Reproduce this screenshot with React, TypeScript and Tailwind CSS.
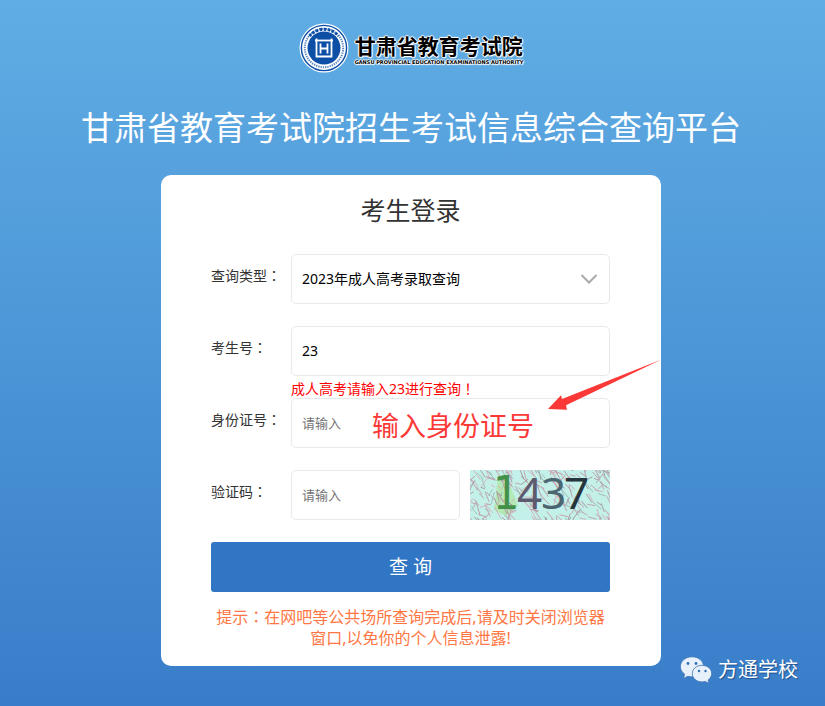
import { useState } from 'react';
import type { FormEvent } from 'react';

// small deterministic generator, keeps the captcha noise stable between renders
const createRandom = (seed: number) => () => {
  seed = (seed * 16807) % 2147483647;
  return seed / 2147483647;
};

const random = createRandom(1437);
const noiseColors = ['#c79aa8', '#b993a3', '#d6a9b8', '#9fb5b4', '#a58f9c'];
const noise = Array.from({ length: 270 }, () => {
  const x = random() * 150 - 8;
  const y = random() * 58 - 8;
  const back = random() > 0.8;
  const dx = (back ? -1 : 1) * (2 + random() * 7);
  const dy = 1 + random() * 12;
  return { x, y, dx, dy, color: noiseColors[Math.floor(random() * noiseColors.length)] };
});

const Seal = () => (
  <svg className="h-[50px] w-[50px] shrink-0" viewBox="0 0 50 50" aria-hidden="true">
    <circle cx="25" cy="25" r="24.5" fill="#ffffff" />
    <circle cx="25" cy="25" r="22.6" fill="none" stroke="#0d4ea6" strokeWidth="1.4" />
    <circle cx="25" cy="25" r="19.2" fill="none" stroke="#5c86c2" strokeWidth="2" strokeDasharray="1.3 1" />
    <path d="M10.500 13A19 19 0 0 1 39.500 13" fill="none" stroke="#0d4ea6" strokeWidth="3" strokeDasharray="2.600 1.400" />
    <circle cx="25" cy="25" r="16.5" fill="#0d4ea6" />
    <g fill="none" stroke="#ffffff" strokeWidth="1.8">
      <path d="M17.500 15.500V33.500H32.500V15.500" />
      <path d="M16 17.500H34" />
      <path d="M21.500 20.500V30.500M28.500 20.500V30.500M21.500 25.500H28.500" />
    </g>
  </svg>
);

const Logo = () => (
  <div className="flex items-center justify-center gap-[6px]">
    <Seal />
    <div className="pt-1 text-left whitespace-nowrap text-black [text-shadow:1px_0_1px_#fff,-1px_0_1px_#fff,0_1px_1px_#fff,0_-1px_1px_#fff,1px_1px_1px_#fff]">
      <p className="text-[21px] leading-6 font-bold">甘肃省教育考试院</p>
      <p className="font-['DejaVu_Sans'] text-[5px] leading-[8px] font-bold">
        GANSU PROVINCIAL EDUCATION EXAMINATIONS AUTHORITY
      </p>
    </div>
  </div>
);

const Captcha = () => (
  <svg className="h-[50px] w-[140px] shrink-0 overflow-visible" viewBox="0 0 140 50" role="img" aria-label="验证码">
    <clipPath id="captcha-area">
      <rect width="140" height="50" />
    </clipPath>
    <g clipPath="url(#captcha-area)">
      <rect width="140" height="50" fill="#c3f0e8" />
      <path d="M28 6L36 4L48 36L36 46L24 40Z" fill="#b4e8b4" />
      {noise.map((line, index) => (
        <path
          key={index}
          d={`M${line.x} ${line.y}l${line.dx} ${line.dy}`}
          stroke={line.color}
          strokeWidth="1"
          strokeOpacity="0.85"
          fill="none"
        />
      ))}
    </g>
    <text x="23" y="39" fontFamily="'DejaVu Sans Condensed', 'DejaVu Sans', sans-serif" fontSize="46" fill="#43904a">
      1
    </text>
    <g fontFamily="'Noto Sans', sans-serif" fontSize="44">
      <text x="47" y="39" fill="#5b5a6e">4</text>
      <text x="71" y="39" fill="#4a6670">3</text>
      <text x="94" y="39" fill="#25353b">7</text>
    </g>
  </svg>
);

const Arrow = () => (
  <svg className="pointer-events-none absolute -top-[39px] left-[337px] h-[51px] w-[114px]" viewBox="0 0 114 51" aria-hidden="true">
    <path d="M0 50L13 36.3L14 40L113.5 0.5L18 46.3L19 50.8Z" fill="#fb3a38" />
  </svg>
);

const WechatIcon = () => (
  <svg className="h-7 w-8" viewBox="0 0 32 28" aria-hidden="true">
    <g fill="#e8f0fb" stroke="#3972b3" strokeWidth="0.8">
      <path d="M12 .8C5.400.8.4 5.100.4 10.700c0 3.100 1.700 5.800 4.300 7.500L3.400 22.500l4.500-2.200c1.300.4 2.700.5 4.100.5 6.600 0 11.600-4.500 11.600-10.100S18.600.8 12 .8Z" />
      <path d="M22 9.300c-5.500 0-9.700 3.700-9.700 8.300s4.200 8.300 9.700 8.300c1.200 0 2.300-.2 3.300-.5l3.700 2.200-.9-3.600c2.200-1.500 3.600-3.800 3.600-6.400 0-4.600-4.200-8.300-9.700-8.300Z" />
    </g>
    <g fill="#2f6fb8">
      <circle cx="8" cy="7.500" r="1.400" />
      <circle cx="16" cy="7.500" r="1.400" />
      <circle cx="19" cy="15" r="1.200" />
      <circle cx="25.500" cy="15" r="1.200" />
    </g>
  </svg>
);

// full-width punctuation sits in the middle of its box
const Mark = ({ children }: { children: string }) => (
  <span className="font-['Noto_Sans_CJK_TC']">{children}</span>
);

const labelClass = 'w-20 shrink-0 text-sm leading-[42px] text-[#333]';
const fieldClass =
  'h-[50px] w-full min-w-0 rounded-[5px] border border-[#e9e9e9] bg-white px-[10px] text-sm text-black outline-none placeholder:text-[13px] placeholder:text-[#757575] focus:border-[#3176c5]';

export default function App() {
  const [type, setType] = useState('2023');
  const [examNo, setExamNo] = useState('23');
  const [idNo, setIdNo] = useState('');
  const [code, setCode] = useState('');

  const handleSubmit = (e: FormEvent) => {
    e.preventDefault();
  };

  return (
    <div className="relative min-h-screen bg-linear-to-b from-[#60ade4] to-[#397dc9] pt-[23px] pr-[3px] pb-10 font-['Noto_Sans','Noto_Sans_CJK_SC',sans-serif]">
      <header className="text-center">
        <Logo />
        <h1 className="mt-[30px] mb-[22px] text-[33px] leading-[50px] text-white">
          甘肃省教育考试院招生考试信息综合查询平台
        </h1>
      </header>

      <main className="mx-auto w-full max-w-[500px] rounded-[10px] bg-white pr-[51px] pb-[17px] pl-[50px]">
        <h2 className="mb-[9px] text-center text-[25px] leading-[70px] text-[#333]">考生登录</h2>

        <form onSubmit={handleSubmit}>
          <div className="mb-[22px] flex items-start">
            <label htmlFor="type" className={labelClass}>
              查询类型<Mark>：</Mark>
            </label>
            <div className="relative min-w-0 flex-1">
              <select
                id="type"
                value={type}
                onChange={(e) => setType(e.target.value)}
                className={`${fieldClass} appearance-none`}
              >
                <option value="2023">2023年成人高考录取查询</option>
              </select>
              <svg
                className="pointer-events-none absolute top-5 right-3 h-[10px] w-[18px]"
                viewBox="0 0 18 10"
                fill="none"
                stroke="#a9a9a9"
                strokeWidth="2"
                aria-hidden="true"
              >
                <path d="M1.500 1L9 8.500L16.500 1" />
              </svg>
            </div>
          </div>

          <div className="flex items-start">
            <label htmlFor="examNo" className={labelClass}>
              考生号<Mark>：</Mark>
            </label>
            <input
              id="examNo"
              type="text"
              value={examNo}
              onChange={(e) => setExamNo(e.target.value)}
              className={`${fieldClass} pb-[2px]`}
            />
          </div>
          <p className="h-[22px] pl-20 text-sm leading-[24px] text-[#ff0000]">
            成人高考请输入23进行查询<Mark>！</Mark>
          </p>

          <div className="relative mb-[22px] flex items-start">
            <label htmlFor="idNo" className={labelClass}>
              身份证号<Mark>：</Mark>
            </label>
            <input
              id="idNo"
              type="text"
              placeholder="请输入"
              value={idNo}
              onChange={(e) => setIdNo(e.target.value)}
              className={`${fieldClass} pb-[2px]`}
            />
            <span className="pointer-events-none absolute top-2 left-[161px] text-[27px] leading-10 text-[#fb3a38]">
              输入身份证号
            </span>
            <Arrow />
          </div>

          <div className="mb-[22px] flex items-start">
            <label htmlFor="code" className={labelClass}>
              验证码<Mark>：</Mark>
            </label>
            <div className="flex min-w-0 flex-1 gap-[10px]">
              <input
                id="code"
                type="text"
                placeholder="请输入"
                value={code}
                onChange={(e) => setCode(e.target.value)}
                className={`${fieldClass} pb-[2px]`}
              />
              <Captcha />
            </div>
          </div>

          <button type="submit" className="h-[50px] w-full rounded-[3px] bg-[#3176c5] text-[19px] text-white">
            查 询
          </button>
        </form>

        <p className="mt-[14px] text-center text-base leading-[21px] text-[#ff7744]">
          提示<Mark>：</Mark>在网吧等公共场所查询完成后,请及时关闭浏览器窗口,以免你的个人信息泄露!
        </p>
      </main>

      <div className="absolute right-[27px] bottom-[21px] flex items-center gap-[6px] text-white">
        <WechatIcon />
        <span className="text-xl leading-[30px] [text-shadow:1px_1px_1px_#1f4f8a]">方通学校</span>
      </div>
    </div>
  );
}
